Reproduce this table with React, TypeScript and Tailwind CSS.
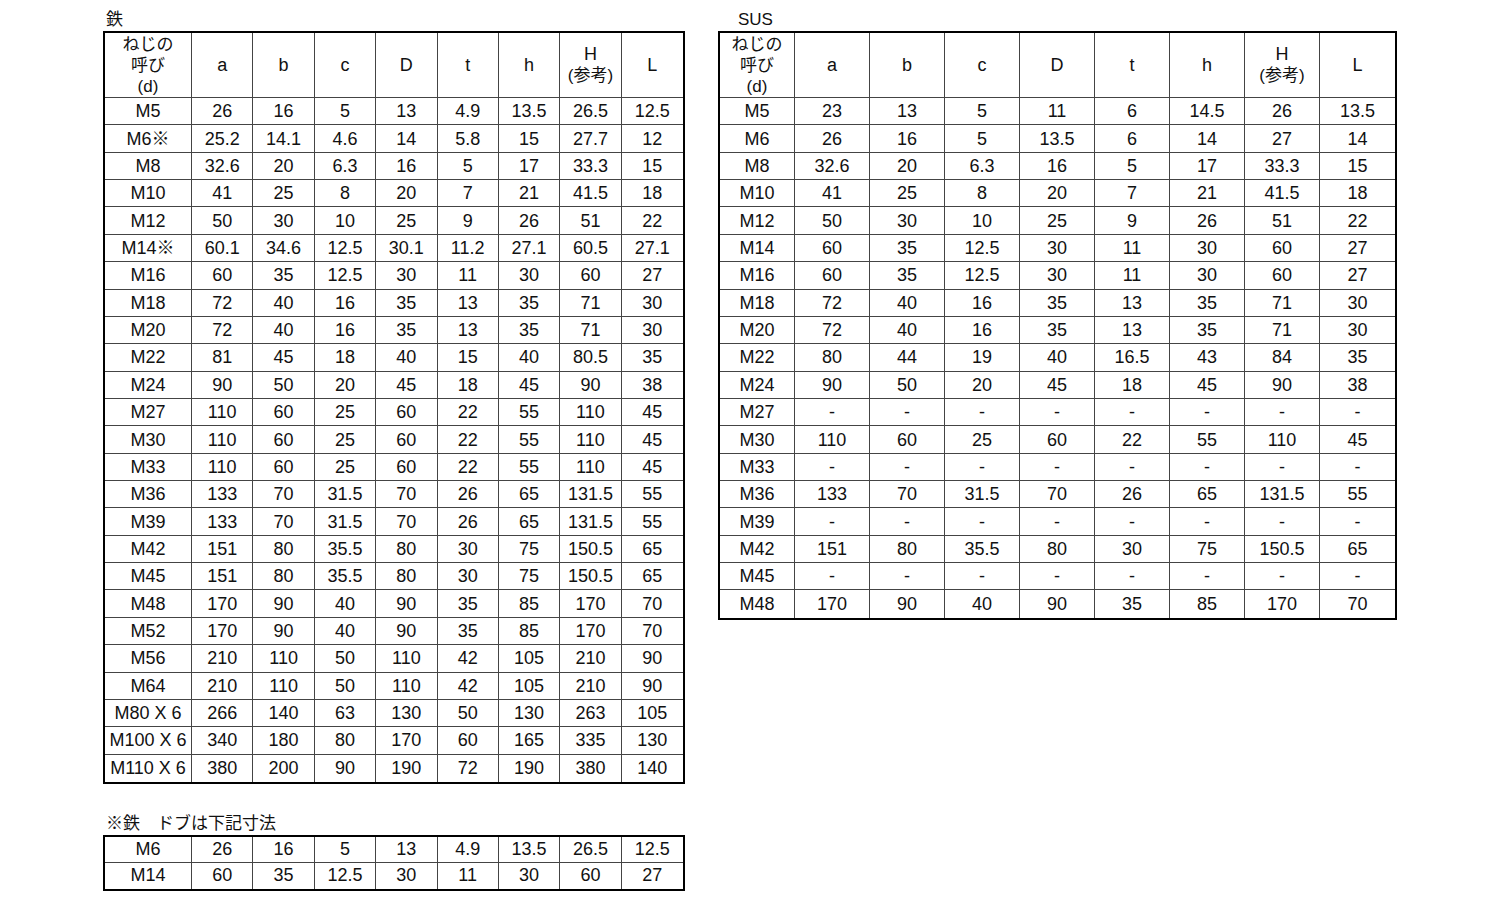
import React from 'react';

const cols = ['a', 'b', 'c', 'D', 't', 'h', 'H', 'L'];

const ironRows: string[][] = [
  ['M5', '26', '16', '5', '13', '4.9', '13.5', '26.5', '12.5'],
  ['M6※', '25.2', '14.1', '4.6', '14', '5.8', '15', '27.7', '12'],
  ['M8', '32.6', '20', '6.3', '16', '5', '17', '33.3', '15'],
  ['M10', '41', '25', '8', '20', '7', '21', '41.5', '18'],
  ['M12', '50', '30', '10', '25', '9', '26', '51', '22'],
  ['M14※', '60.1', '34.6', '12.5', '30.1', '11.2', '27.1', '60.5', '27.1'],
  ['M16', '60', '35', '12.5', '30', '11', '30', '60', '27'],
  ['M18', '72', '40', '16', '35', '13', '35', '71', '30'],
  ['M20', '72', '40', '16', '35', '13', '35', '71', '30'],
  ['M22', '81', '45', '18', '40', '15', '40', '80.5', '35'],
  ['M24', '90', '50', '20', '45', '18', '45', '90', '38'],
  ['M27', '110', '60', '25', '60', '22', '55', '110', '45'],
  ['M30', '110', '60', '25', '60', '22', '55', '110', '45'],
  ['M33', '110', '60', '25', '60', '22', '55', '110', '45'],
  ['M36', '133', '70', '31.5', '70', '26', '65', '131.5', '55'],
  ['M39', '133', '70', '31.5', '70', '26', '65', '131.5', '55'],
  ['M42', '151', '80', '35.5', '80', '30', '75', '150.5', '65'],
  ['M45', '151', '80', '35.5', '80', '30', '75', '150.5', '65'],
  ['M48', '170', '90', '40', '90', '35', '85', '170', '70'],
  ['M52', '170', '90', '40', '90', '35', '85', '170', '70'],
  ['M56', '210', '110', '50', '110', '42', '105', '210', '90'],
  ['M64', '210', '110', '50', '110', '42', '105', '210', '90'],
  ['M80 X 6', '266', '140', '63', '130', '50', '130', '263', '105'],
  ['M100 X 6', '340', '180', '80', '170', '60', '165', '335', '130'],
  ['M110 X 6', '380', '200', '90', '190', '72', '190', '380', '140'],
];

const dash = ['-', '-', '-', '-', '-', '-', '-', '-'];

const susRows: string[][] = [
  ['M5', '23', '13', '5', '11', '6', '14.5', '26', '13.5'],
  ['M6', '26', '16', '5', '13.5', '6', '14', '27', '14'],
  ['M8', '32.6', '20', '6.3', '16', '5', '17', '33.3', '15'],
  ['M10', '41', '25', '8', '20', '7', '21', '41.5', '18'],
  ['M12', '50', '30', '10', '25', '9', '26', '51', '22'],
  ['M14', '60', '35', '12.5', '30', '11', '30', '60', '27'],
  ['M16', '60', '35', '12.5', '30', '11', '30', '60', '27'],
  ['M18', '72', '40', '16', '35', '13', '35', '71', '30'],
  ['M20', '72', '40', '16', '35', '13', '35', '71', '30'],
  ['M22', '80', '44', '19', '40', '16.5', '43', '84', '35'],
  ['M24', '90', '50', '20', '45', '18', '45', '90', '38'],
  ['M27', ...dash],
  ['M30', '110', '60', '25', '60', '22', '55', '110', '45'],
  ['M33', ...dash],
  ['M36', '133', '70', '31.5', '70', '26', '65', '131.5', '55'],
  ['M39', ...dash],
  ['M42', '151', '80', '35.5', '80', '30', '75', '150.5', '65'],
  ['M45', ...dash],
  ['M48', '170', '90', '40', '90', '35', '85', '170', '70'],
];

const dobuRows: string[][] = [
  ['M6', '26', '16', '5', '13', '4.9', '13.5', '26.5', '12.5'],
  ['M14', '60', '35', '12.5', '30', '11', '30', '60', '27'],
];

const SpecTable = ({
  rows,
  wide,
  header = true,
  short,
}: {
  rows: string[][];
  wide?: boolean;
  header?: boolean;
  short?: boolean;
}) => {
  const grid = wide
    ? 'grid w-[675px] grid-cols-[75px_repeat(8,1fr)]'
    : 'grid w-[578px] grid-cols-[87px_repeat(8,1fr)]';
  const cell = 'flex items-center justify-center border-[#444]';
  const rowH = short ? 'h-[26px]' : 'h-[27.36px] pt-px';

  return (
    <div className="border-2 border-black">
      {header && (
        <div className={grid}>
          <div className={`${cell} h-[65px] flex-col border-r border-b text-[17px] leading-[21px]`}>
            <span>ねじの</span>
            <span>呼び</span>
            <span>(d)</span>
          </div>
          {cols.map((c, i) => (
            <div
              key={c}
              className={`${cell} h-[65px] border-b ${i < cols.length - 1 ? 'border-r' : ''} flex-col text-[18px] leading-[21px]`}
            >
              {c === 'H' ? (
                <>
                  <span>H</span>
                  <span className="text-[17px]">(参考)</span>
                </>
              ) : (
                <span>{c}</span>
              )}
            </div>
          ))}
        </div>
      )}
      {rows.map((row, r) => (
        <div key={r} className={grid}>
          {row.map((v, i) => (
            <div
              key={i}
              className={`${cell} ${rowH} text-[18px] ${r < rows.length - 1 ? 'border-b' : ''} ${i < row.length - 1 ? 'border-r' : ''}`}
            >
              {v}
            </div>
          ))}
        </div>
      ))}
    </div>
  );
};

const App = () => {
  return (
    <div
      className="flex min-h-[900px] w-[1500px] gap-[33px] bg-white pl-[103px] pt-[7px] text-[#111]"
      style={{ fontFamily: '"Liberation Sans", "Noto Sans CJK JP", sans-serif' }}
    >
      {/* 鉄 */}
      <div className="flex flex-col">
        <div className="h-[24px] pl-[3px] text-[17px] leading-[26px]">鉄</div>
        <SpecTable rows={ironRows} />
        <div className="mt-[27px] h-[24px] pl-[3px] text-[17px] leading-[26px]">※鉄　ドブは下記寸法</div>
        <SpecTable rows={dobuRows} header={false} short />
      </div>

      {/* SUS */}
      <div className="flex flex-col">
        <div className="h-[24px] pl-[20px] text-[17px] leading-[26px]">SUS</div>
        <SpecTable rows={susRows} wide />
      </div>
    </div>
  );
};

export default App;
